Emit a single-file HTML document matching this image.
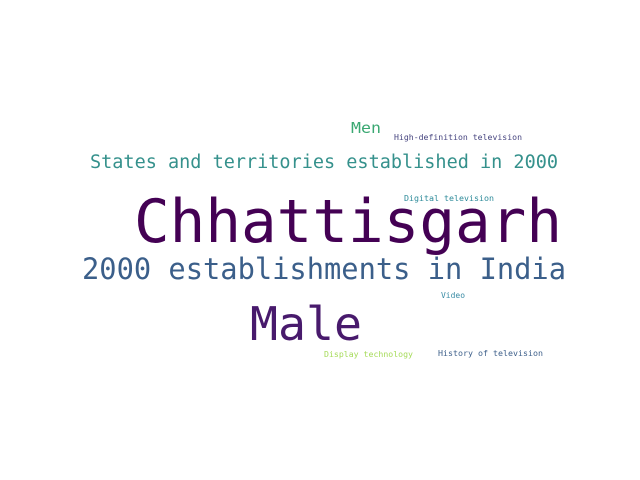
<!DOCTYPE html>
<html><head><meta charset="utf-8"><style>
html,body{margin:0;padding:0;background:#fff;}
svg{display:block}
text{font-family:"DejaVu Sans Mono","Liberation Mono",monospace;}
</style></head><body>
<svg width="640" height="480" xmlns="http://www.w3.org/2000/svg">
<rect width="640" height="480" fill="#fff"/>
<text x="134" y="242" font-size="60" fill="#440154" textLength="428" lengthAdjust="spacingAndGlyphs">Chhattisgarh</text>
<text x="82" y="279" font-size="29" fill="#3b5f8a" textLength="484" lengthAdjust="spacingAndGlyphs">2000 establishments in India</text>
<text x="250" y="340" font-size="46" fill="#481a6c" textLength="112" lengthAdjust="spacingAndGlyphs">Male</text>
<text x="90" y="168" font-size="18.5" fill="#35918c" textLength="468" lengthAdjust="spacingAndGlyphs">States and territories established in 2000</text>
<text x="351" y="133" font-size="15" fill="#3aa872" textLength="30" lengthAdjust="spacingAndGlyphs">Men</text>
<text x="394" y="140" font-size="8" fill="#46447f" textLength="128" lengthAdjust="spacingAndGlyphs">High-definition television</text>
<text x="404" y="201" font-size="8" fill="#2e8b9a" textLength="90" lengthAdjust="spacingAndGlyphs">Digital television</text>
<text x="441" y="298" font-size="8" fill="#3a8ca5" textLength="24" lengthAdjust="spacingAndGlyphs">Video</text>
<text x="324" y="357" font-size="8" fill="#a6db5a" textLength="89" lengthAdjust="spacingAndGlyphs">Display technology</text>
<text x="438" y="356" font-size="8" fill="#3d5f8a" textLength="105" lengthAdjust="spacingAndGlyphs">History of television</text>
</svg>
</body></html>
